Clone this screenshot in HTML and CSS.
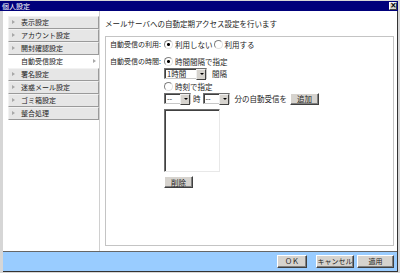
FILE: index.html
```html
<!DOCTYPE html>
<html lang="ja">
<head>
  <meta charset="UTF-8">
  <title>個人設定</title>
  <link rel="stylesheet" href="styles.css">
</head>
<body>
  <div class="window">
    <div class="titlebar">
      <span>個人設定</span>
      <span class="close">×</span>
    </div>
    <div class="frame">
      <div class="main">
        <ul class="menu">
          <li class="menu-item">表示設定</li>
          <li class="menu-item">アカウント設定</li>
          <li class="menu-item">開封確認設定</li>
          <li class="menu-item active">自動受信設定</li>
          <li class="menu-item">署名設定</li>
          <li class="menu-item">迷惑メール設定</li>
          <li class="menu-item">ゴミ箱設定</li>
          <li class="menu-item">整合処理</li>
        </ul>
        <div class="content">
          <p class="lead">メールサーバへの自動定期アクセス設定を行います</p>
          <div class="group">
            <div class="row">
              <div class="label">自動受信の利用:</div>
              <div class="field inline">
                <span class="radio checked">利用しない</span>
                <span class="radio">利用する</span>
              </div>
            </div>
            <div class="row second">
              <div class="label">自動受信の時間:</div>
              <div class="field">
                <span class="radio checked">時間間隔で指定</span>
                <div class="line">
                  <span class="select w-hour">1時間</span>
                  <span class="after">間隔</span>
                </div>
                <span class="radio">時刻で指定</span>
                <div class="line">
                  <span class="select w-min">--</span>
                  <span class="unit">時</span>
                  <span class="select w-min">--</span>
                  <span class="after">分の自動受信を</span>
                  <button class="btn add">追加</button>
                </div>
                <div class="listbox"></div>
                <button class="btn del">削除</button>
              </div>
            </div>
          </div>
        </div>
      </div>
      <div class="footer">
        <button class="btn foot ok">ＯＫ</button>
        <button class="btn foot cancel">キャンセル</button>
        <button class="btn foot apply">適用</button>
      </div>
    </div>
  </div>
</body>
</html>
```

FILE: styles.css
```css
* {
  box-sizing: border-box;
  margin: 0;
  padding: 0;
}
body {
  font-family: "Noto Sans CJK JP", "DejaVu Sans", sans-serif;
  font-size: 7.5px;
  color: #222;
  background: #d6d6d6;
  white-space: nowrap;
}
.window {
  width: 400px;
  height: 273px;
  background: #d6d6d6;
  padding: 1px 2px 1px 0;
  display: flex;
  flex-direction: column;
}
.titlebar {
  height: 10px;
  background: #00007b;
  color: #fff;
  font-size: 7px;
  display: flex;
  align-items: center;
  justify-content: space-between;
  padding: 0 1px 0 2px;
  line-height: 10px;
}
.close {
  width: 8px;
  height: 8px;
  background: #d6d3ce;
  border: 1px solid;
  border-color: #fff #404040 #404040 #fff;
  color: #000;
  font-size: 8px;
  line-height: 5px;
  text-align: center;
  font-family: "DejaVu Sans", sans-serif;
  font-weight: bold;
}
.frame {
  flex: 1;
  display: flex;
  flex-direction: column;
  margin-left: 3px;
  border-right: 1px solid #333;
}
.main {
  flex: 1;
  display: flex;
  background: #fff;
}
.menu {
  list-style: none;
  width: 97px;
  border-right: 1px solid #d0d0d0;
  padding: 5px 0 0 5px;
  font-size: 7px;
}
.menu-item {
  position: relative;
  height: 13px;
  line-height: 11px;
  padding-left: 12px;
  background: #e6e6e6;
  border: 1px solid;
  border-color: #f2f2f2 #9a9a9a #9a9a9a #f2f2f2;
}
.menu-item::before {
  content: "";
  position: absolute;
  left: 3px;
  top: 3px;
  border-left: 3px solid #a8a8a8;
  border-top: 2px solid transparent;
  border-bottom: 2px solid transparent;
}
.menu-item.active {
  background: #fff;
  border-color: #fff;
}
.menu-item.active::before {
  left: auto;
  right: 2px;
}
.content {
  flex: 1;
  display: flex;
  flex-direction: column;
  padding: 8px 3px 5px 5px;
}
.lead {
  line-height: 9px;
  height: 9px;
}
.group {
  flex: 1;
  margin-top: 8px;
  border: 1px solid #c4c4c4;
  padding: 1px 4px;
}
.row {
  display: flex;
}
.second {
  margin-top: 5px;
}
.label {
  width: 54px;
  flex: none;
  font-size: 7px;
  line-height: 12px;
}
.field {
  display: flex;
  flex-direction: column;
  align-items: flex-start;
}
.field.inline {
  flex-direction: row;
  gap: 1px;
}
.radio {
  display: flex;
  align-items: center;
  height: 12px;
}
.radio::before {
  content: "";
  width: 7px;
  height: 7px;
  margin-right: 2px;
  border-radius: 50%;
  border: 1px solid;
  border-color: #808080 #e0e0e0 #e0e0e0 #808080;
  background: #fff;
}
.radio.checked::before {
  background: radial-gradient(circle, #000 0 1.3px, #fff 1.6px);
}
.line {
  display: flex;
  align-items: center;
  height: 11px;
  margin: 1px 0;
}
.select {
  position: relative;
  height: 11px;
  line-height: 9px;
  padding-left: 2px;
  background: #fff;
  border: 1px solid;
  border-color: #707070 #c8c8c8 #c8c8c8 #707070;
  box-shadow: inset 1px 1px 0 #404040;
}
.select::after {
  content: "";
  position: absolute;
  right: 0;
  top: 0;
  width: 8px;
  height: 9px;
  background: #d6d3ce;
  border: 1px solid;
  border-color: #f0f0f0 #404040 #404040 #f0f0f0;
}
.select::before {
  content: "";
  position: absolute;
  right: 2px;
  top: 4px;
  z-index: 1;
  border-top: 2px solid #000;
  border-left: 2px solid transparent;
  border-right: 2px solid transparent;
}
.w-hour {
  width: 43px;
}
.w-min {
  width: 27px;
}
.after {
  margin-left: 5px;
}
.unit {
  margin: 0 2px;
}
.btn {
  font-family: inherit;
  font-size: 7.5px;
  color: #222;
  background: #d6d3ce;
  border: 1px solid;
  border-color: #fff #404040 #404040 #fff;
  box-shadow: inset -1px -1px 0 #808080;
  height: 12px;
  line-height: 9px;
  padding: 0;
}
.add {
  width: 29px;
  margin-left: 3px;
}
.listbox {
  margin-top: 4px;
  width: 56px;
  height: 63px;
  background: #fff;
  border: 1px solid;
  border-color: #707070 #e8e8e8 #e8e8e8 #707070;
  box-shadow: inset 1px 1px 0 #404040;
}
.del {
  margin-top: 4px;
  width: 29px;
}
.footer {
  height: 21px;
  background: #99ccff;
  border-top: 1px solid #666;
  border-bottom: 1px solid #333;
  display: flex;
  justify-content: flex-end;
  align-items: center;
  gap: 3px;
  padding-right: 3px;
}
.foot {
  height: 13px;
  font-size: 7px;
}
.ok {
  width: 30px;
  margin-right: 6px;
}
.cancel {
  width: 38px;
}
.apply {
  width: 37px;
}
```
